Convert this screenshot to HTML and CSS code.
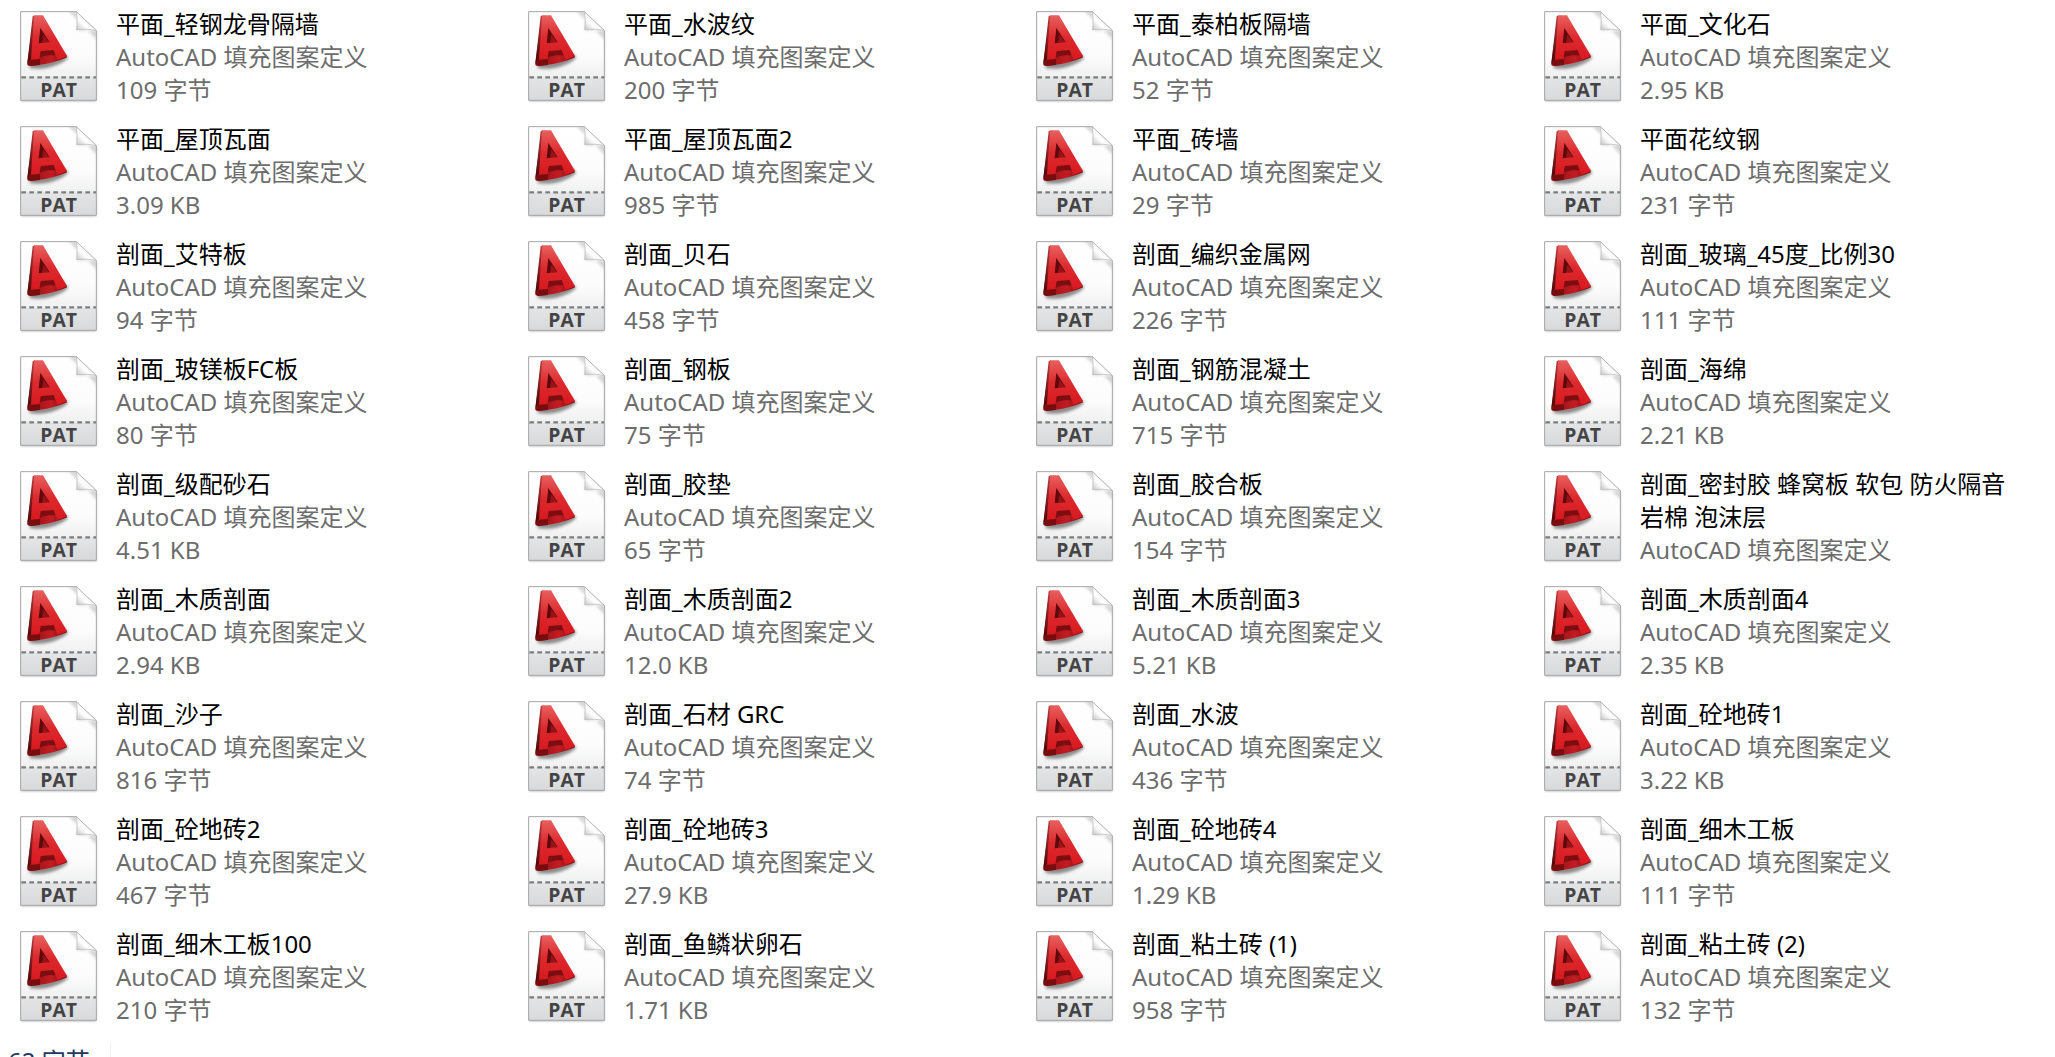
FILE: index.html
```html
<!DOCTYPE html>
<html lang="zh-CN">
<head>
<meta charset="utf-8">
<title>填充图案</title>
<link rel="stylesheet" href="styles.css">
</head>
<body>
<svg class="defs" aria-hidden="true">
  <defs>
    <linearGradient id="paper" x1="0" y1="0" x2="0" y2="1">
      <stop offset="0" stop-color="#fff"/><stop offset=".5" stop-color="#fcfcfc"/><stop offset="1" stop-color="#e2e3e5"/>
    </linearGradient>
    <linearGradient id="band" x1="0" y1="0" x2="0" y2="1">
      <stop offset="0" stop-color="#e4e5e6"/><stop offset="1" stop-color="#d8d9db"/>
    </linearGradient>
    <linearGradient id="face" x1="0" y1="0" x2="0" y2="1">
      <stop offset="0" stop-color="#e8605f"/><stop offset=".5" stop-color="#dc2a2e"/><stop offset="1" stop-color="#d8191f"/>
    </linearGradient>
    <linearGradient id="side" x1="0" y1="0" x2="0" y2="1">
      <stop offset="0" stop-color="#b8393b"/><stop offset="1" stop-color="#4a0709"/>
    </linearGradient>
    <linearGradient id="base" x1="0" y1="0" x2="1" y2="0">
      <stop offset="0" stop-color="#8c1013"/><stop offset=".25" stop-color="#a01519"/><stop offset=".6" stop-color="#c41c22"/><stop offset="1" stop-color="#6d0c0f"/>
    </linearGradient>
    <linearGradient id="curl" x1=".1" y1=".9" x2=".6" y2=".4">
      <stop offset="0" stop-color="#d2d2d2"/><stop offset=".5" stop-color="#fff"/><stop offset="1" stop-color="#f4f4f4"/>
    </linearGradient>
    <filter id="soft" x="-30%" y="-30%" width="160%" height="160%"><feGaussianBlur stdDeviation="5"/></filter>
    <filter id="edge" x="-10%" y="-10%" width="120%" height="120%"><feGaussianBlur stdDeviation="3"/></filter>
    <clipPath id="sheet"><path d="M2 2H169L229 59V268H2Z"/></clipPath>
  </defs>
  <symbol id="pat" viewBox="0 0 240 276">
    <path d="M3 8H169L229 62V271H3Z" fill="#777" opacity=".55" filter="url(#edge)"/>
    <path d="M2 2H169L229 59V268H2Z" fill="url(#paper)"/>
    <g clip-path="url(#sheet)">
      <path d="M145 0H172V58H232V88Z" fill="#888" opacity=".35" filter="url(#soft)"/>
      <path d="M2 199H229V268H2Z" fill="url(#band)"/>
    </g>
    <path d="M2 2H169L229 59V268H2Z" fill="none" stroke="#a5a5a5" stroke-width="3"/>
    <path d="M169 2C172 20 172 38 170 56C190 54 212 54 229 59Z" fill="url(#curl)" stroke="#b5b5b5" stroke-width="2"/>
    <path d="M4 199H228" stroke="#7d7d7d" stroke-width="7" stroke-dasharray="14 10"/>
    <path d="M26 150L120 110L145 140C120 165 70 178 30 172Z" fill="#444" opacity=".6" filter="url(#soft)"/>
    <path d="M41 14L22 158C21 164 28 165 35 164C75 162 113 151 141 139L138 132L100 100Z" fill="url(#base)"/>
    <path d="M44 13L38 16L22 156L34 142Z" fill="url(#side)"/>
    <path d="M22 156L36 142L60 145L60 162L30 165Z" fill="#780d10"/>
    <path d="M61 119L102 115L111 134C96 132 76 132 59 140Z" fill="#7c0e12"/>
    <path d="M60 50L54 98H92Z" fill="#5e090c"/>
    <path d="M70 70L90 97H66Z" fill="#941418"/>
    <path fill-rule="evenodd" d="M42 13H69L141 135C132 140 122 144 112 146L101 117L62 120L58 144L33 146ZM61 50L56 97L90 94Z" fill="url(#face)"/>
    <text class="ext" x="116" y="258" text-anchor="middle">PAT</text>
  </symbol>
</svg>
<main>
<ul class="files">
  <li class="file"><svg class="icon"><use href="#pat"/></svg><div class="info"><p class="name">平面_轻钢龙骨隔墙</p><p>AutoCAD 填充图案定义</p><p>109 字节</p></div></li>
  <li class="file"><svg class="icon"><use href="#pat"/></svg><div class="info"><p class="name">平面_水波纹</p><p>AutoCAD 填充图案定义</p><p>200 字节</p></div></li>
  <li class="file"><svg class="icon"><use href="#pat"/></svg><div class="info"><p class="name">平面_泰柏板隔墙</p><p>AutoCAD 填充图案定义</p><p>52 字节</p></div></li>
  <li class="file"><svg class="icon"><use href="#pat"/></svg><div class="info"><p class="name">平面_文化石</p><p>AutoCAD 填充图案定义</p><p>2.95 KB</p></div></li>
  <li class="file"><svg class="icon"><use href="#pat"/></svg><div class="info"><p class="name">平面_屋顶瓦面</p><p>AutoCAD 填充图案定义</p><p>3.09 KB</p></div></li>
  <li class="file"><svg class="icon"><use href="#pat"/></svg><div class="info"><p class="name">平面_屋顶瓦面2</p><p>AutoCAD 填充图案定义</p><p>985 字节</p></div></li>
  <li class="file"><svg class="icon"><use href="#pat"/></svg><div class="info"><p class="name">平面_砖墙</p><p>AutoCAD 填充图案定义</p><p>29 字节</p></div></li>
  <li class="file"><svg class="icon"><use href="#pat"/></svg><div class="info"><p class="name">平面花纹钢</p><p>AutoCAD 填充图案定义</p><p>231 字节</p></div></li>
  <li class="file"><svg class="icon"><use href="#pat"/></svg><div class="info"><p class="name">剖面_艾特板</p><p>AutoCAD 填充图案定义</p><p>94 字节</p></div></li>
  <li class="file"><svg class="icon"><use href="#pat"/></svg><div class="info"><p class="name">剖面_贝石</p><p>AutoCAD 填充图案定义</p><p>458 字节</p></div></li>
  <li class="file"><svg class="icon"><use href="#pat"/></svg><div class="info"><p class="name">剖面_编织金属网</p><p>AutoCAD 填充图案定义</p><p>226 字节</p></div></li>
  <li class="file"><svg class="icon"><use href="#pat"/></svg><div class="info"><p class="name">剖面_玻璃_45度_比例30</p><p>AutoCAD 填充图案定义</p><p>111 字节</p></div></li>
  <li class="file"><svg class="icon"><use href="#pat"/></svg><div class="info"><p class="name">剖面_玻镁板FC板</p><p>AutoCAD 填充图案定义</p><p>80 字节</p></div></li>
  <li class="file"><svg class="icon"><use href="#pat"/></svg><div class="info"><p class="name">剖面_钢板</p><p>AutoCAD 填充图案定义</p><p>75 字节</p></div></li>
  <li class="file"><svg class="icon"><use href="#pat"/></svg><div class="info"><p class="name">剖面_钢筋混凝土</p><p>AutoCAD 填充图案定义</p><p>715 字节</p></div></li>
  <li class="file"><svg class="icon"><use href="#pat"/></svg><div class="info"><p class="name">剖面_海绵</p><p>AutoCAD 填充图案定义</p><p>2.21 KB</p></div></li>
  <li class="file"><svg class="icon"><use href="#pat"/></svg><div class="info"><p class="name">剖面_级配砂石</p><p>AutoCAD 填充图案定义</p><p>4.51 KB</p></div></li>
  <li class="file"><svg class="icon"><use href="#pat"/></svg><div class="info"><p class="name">剖面_胶垫</p><p>AutoCAD 填充图案定义</p><p>65 字节</p></div></li>
  <li class="file"><svg class="icon"><use href="#pat"/></svg><div class="info"><p class="name">剖面_胶合板</p><p>AutoCAD 填充图案定义</p><p>154 字节</p></div></li>
  <li class="file"><svg class="icon"><use href="#pat"/></svg><div class="info"><p class="name">剖面_密封胶 蜂窝板 软包 防火隔音岩棉 泡沫层</p><p>AutoCAD 填充图案定义</p></div></li>
  <li class="file"><svg class="icon"><use href="#pat"/></svg><div class="info"><p class="name">剖面_木质剖面</p><p>AutoCAD 填充图案定义</p><p>2.94 KB</p></div></li>
  <li class="file"><svg class="icon"><use href="#pat"/></svg><div class="info"><p class="name">剖面_木质剖面2</p><p>AutoCAD 填充图案定义</p><p>12.0 KB</p></div></li>
  <li class="file"><svg class="icon"><use href="#pat"/></svg><div class="info"><p class="name">剖面_木质剖面3</p><p>AutoCAD 填充图案定义</p><p>5.21 KB</p></div></li>
  <li class="file"><svg class="icon"><use href="#pat"/></svg><div class="info"><p class="name">剖面_木质剖面4</p><p>AutoCAD 填充图案定义</p><p>2.35 KB</p></div></li>
  <li class="file"><svg class="icon"><use href="#pat"/></svg><div class="info"><p class="name">剖面_沙子</p><p>AutoCAD 填充图案定义</p><p>816 字节</p></div></li>
  <li class="file"><svg class="icon"><use href="#pat"/></svg><div class="info"><p class="name">剖面_石材 GRC</p><p>AutoCAD 填充图案定义</p><p>74 字节</p></div></li>
  <li class="file"><svg class="icon"><use href="#pat"/></svg><div class="info"><p class="name">剖面_水波</p><p>AutoCAD 填充图案定义</p><p>436 字节</p></div></li>
  <li class="file"><svg class="icon"><use href="#pat"/></svg><div class="info"><p class="name">剖面_砼地砖1</p><p>AutoCAD 填充图案定义</p><p>3.22 KB</p></div></li>
  <li class="file"><svg class="icon"><use href="#pat"/></svg><div class="info"><p class="name">剖面_砼地砖2</p><p>AutoCAD 填充图案定义</p><p>467 字节</p></div></li>
  <li class="file"><svg class="icon"><use href="#pat"/></svg><div class="info"><p class="name">剖面_砼地砖3</p><p>AutoCAD 填充图案定义</p><p>27.9 KB</p></div></li>
  <li class="file"><svg class="icon"><use href="#pat"/></svg><div class="info"><p class="name">剖面_砼地砖4</p><p>AutoCAD 填充图案定义</p><p>1.29 KB</p></div></li>
  <li class="file"><svg class="icon"><use href="#pat"/></svg><div class="info"><p class="name">剖面_细木工板</p><p>AutoCAD 填充图案定义</p><p>111 字节</p></div></li>
  <li class="file"><svg class="icon"><use href="#pat"/></svg><div class="info"><p class="name">剖面_细木工板100</p><p>AutoCAD 填充图案定义</p><p>210 字节</p></div></li>
  <li class="file"><svg class="icon"><use href="#pat"/></svg><div class="info"><p class="name">剖面_鱼鳞状卵石</p><p>AutoCAD 填充图案定义</p><p>1.71 KB</p></div></li>
  <li class="file"><svg class="icon"><use href="#pat"/></svg><div class="info"><p class="name">剖面_粘土砖 (1)</p><p>AutoCAD 填充图案定义</p><p>958 字节</p></div></li>
  <li class="file"><svg class="icon"><use href="#pat"/></svg><div class="info"><p class="name">剖面_粘土砖 (2)</p><p>AutoCAD 填充图案定义</p><p>132 字节</p></div></li>
</ul>
</main>
<footer class="status"><span class="size">62 字节</span></footer>
</body>
</html>
```

FILE: styles.css
```css
html {
  height: 100%;
}

body {
  display: flex;
  flex-direction: column;
  height: 100%;
  margin: 0;
  overflow: hidden;
  background: #fff;
  color: #6d6d6d;
  font: 24px/33px "Noto Sans", "Noto Sans CJK SC", sans-serif;
}

main {
  flex: none;
}

p {
  margin: 0;
}

.defs {
  position: absolute;
  width: 0;
  height: 0;
}

.files {
  display: grid;
  grid-template-columns: repeat(auto-fill, 472px);
  grid-auto-rows: 99px;
  gap: 16px 36px;
  margin: 0;
  padding: 7px 0 8px 20px;
  list-style: none;
}

.file {
  display: flex;
  gap: 16px;
}

.icon {
  flex: none;
  width: 80px;
  height: 92px;
  margin-top: 4px;
}

.ext {
  fill: #444;
  font: bold 58px "Open Sans", sans-serif;
}

.info {
  flex: 1;
  min-width: 0;
}

.name {
  color: #000;
}

.status {
  display: flex;
  flex: none;
  padding: 10px 8px;
  color: #1e395b;
}

.size {
  padding-right: 20px;
  border-right: 1px solid #f0f0f0;
}
```
